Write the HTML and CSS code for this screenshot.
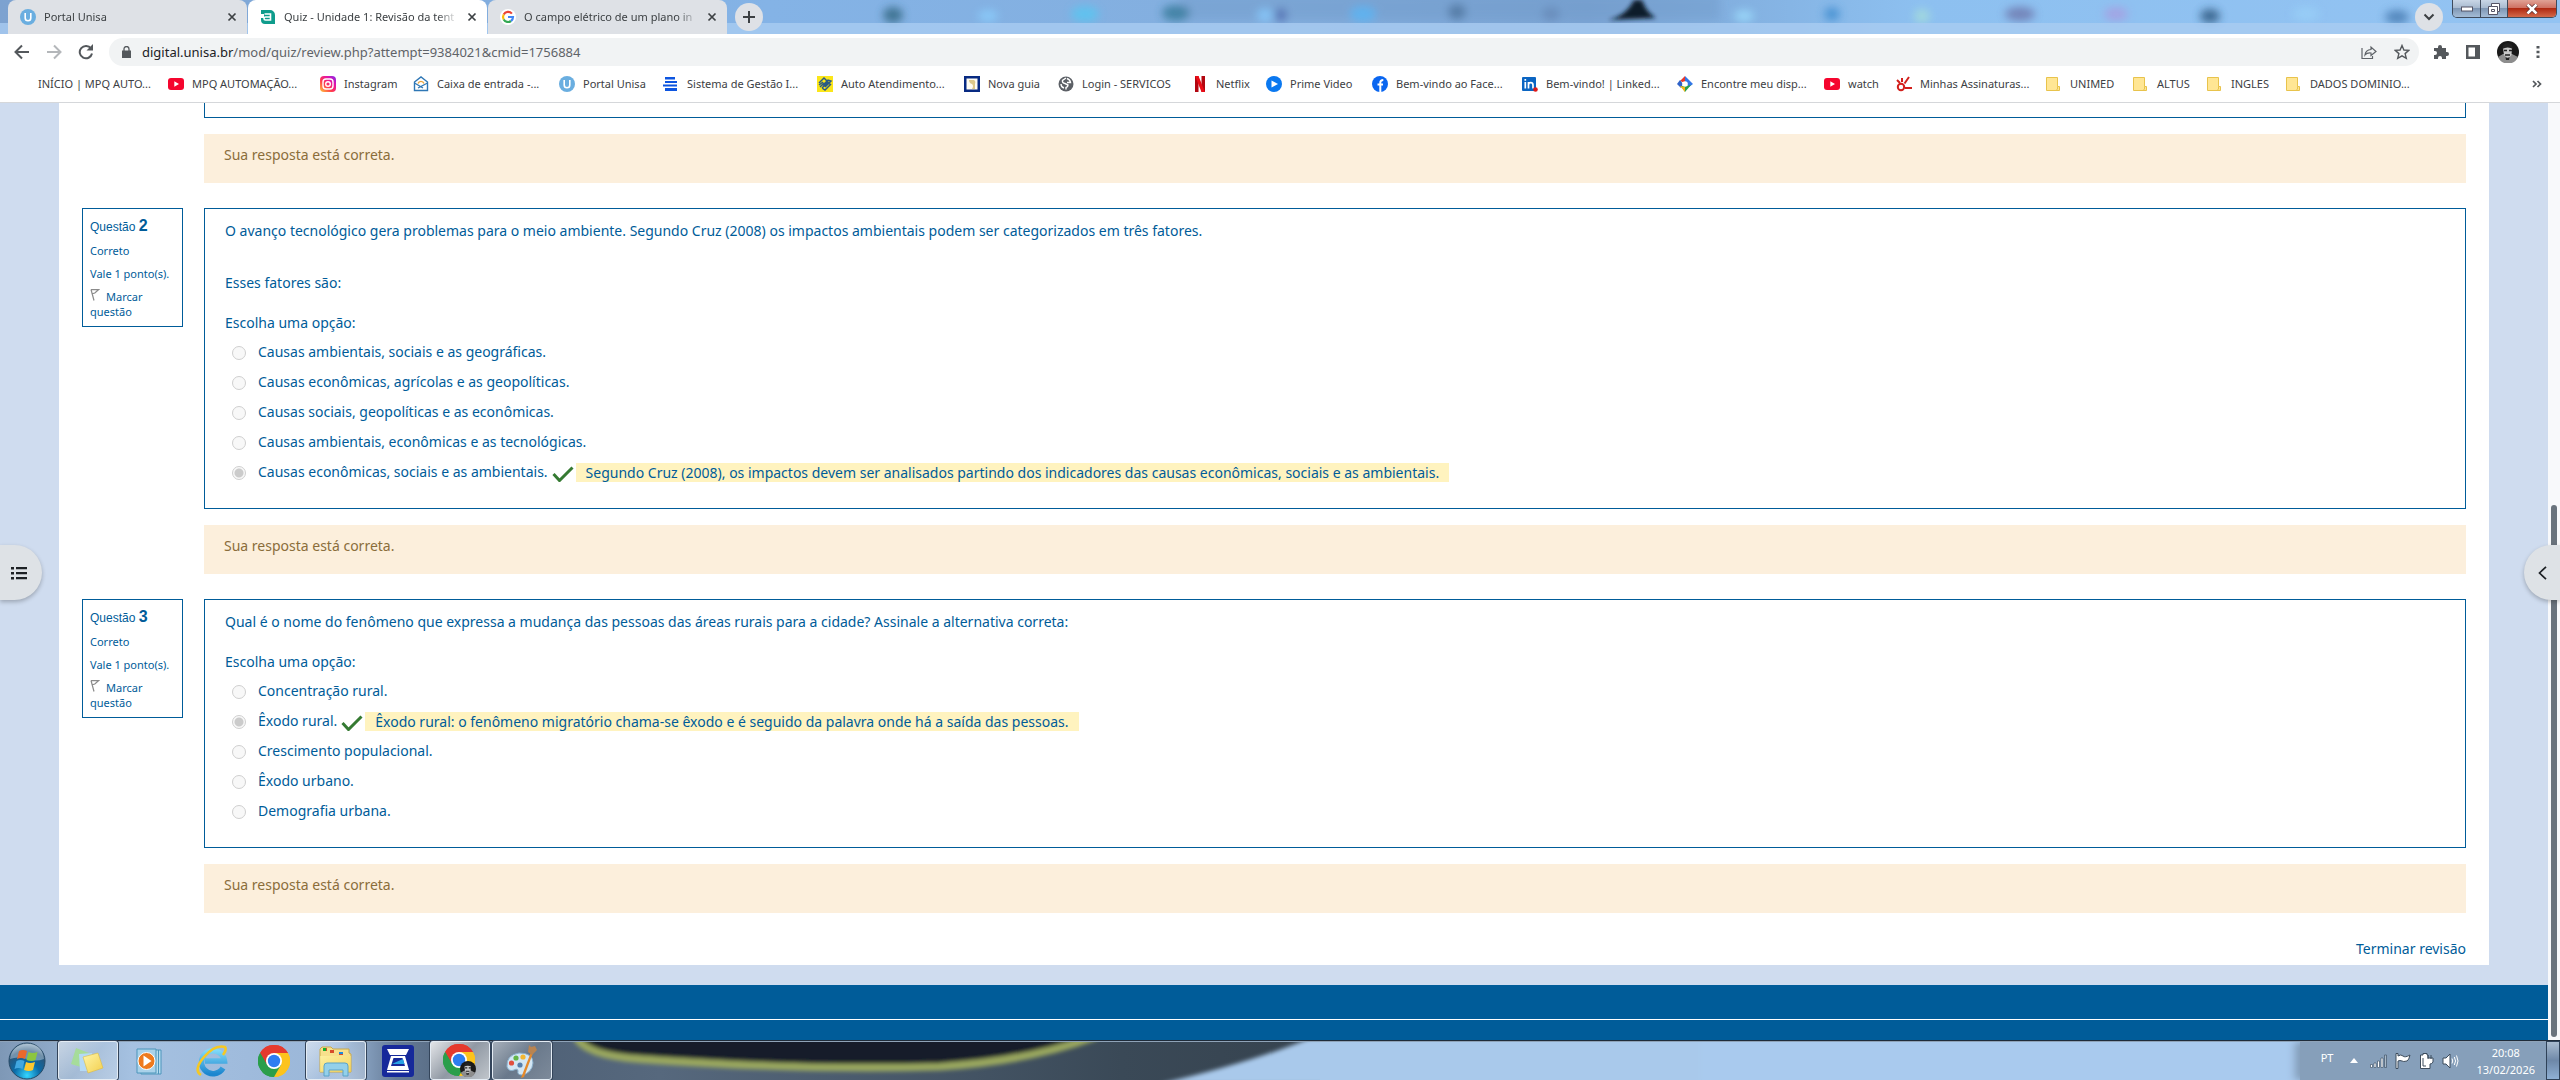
FILE: index.html
```html
<!DOCTYPE html>
<html lang="pt-BR">
<head>
<meta charset="utf-8">
<title>Quiz - Unidade 1: Revisão da tentativa</title>
<link rel="stylesheet" href="styles.css">
</head>
<body>
<svg class="defs" aria-hidden="true">
  <defs>
    <linearGradient id="g-yellow" x1="0" y1="0" x2="1" y2="1"><stop offset="0" stop-color="#fff6a8"/><stop offset="1" stop-color="#f3cf4e"/></linearGradient>
    <linearGradient id="g-ie" x1="0" y1="0" x2="0" y2="1"><stop offset="0" stop-color="#7fd8f8"/><stop offset="1" stop-color="#1b86cf"/></linearGradient>
    <linearGradient id="g-insta" x1="0" y1="1" x2="1" y2="0"><stop offset="0" stop-color="#ffc83a"/><stop offset=".4" stop-color="#ff3a4e"/><stop offset=".7" stop-color="#e313a8"/><stop offset="1" stop-color="#7a2cf0"/></linearGradient>
    <radialGradient id="g-orb" cx=".5" cy=".9" r=".9"><stop offset="0" stop-color="#35d6ff"/><stop offset=".4" stop-color="#0a6ba8"/><stop offset=".75" stop-color="#2c5578"/><stop offset="1" stop-color="#a9bfd0"/></radialGradient>
    <filter id="soft" x="-30%" y="-80%" width="160%" height="260%"><feGaussianBlur stdDeviation="4"/></filter>
    <filter id="soft2" x="-30%" y="-80%" width="160%" height="260%"><feGaussianBlur stdDeviation="2"/></filter>
  </defs>
  <symbol id="i-u" viewBox="0 0 16 16"><circle cx="8" cy="8" r="8" fill="#6aaee0"/><path d="M5.2 4v5a2.8 2.8 0 0 0 5.6 0V4" fill="none" stroke="#fff" stroke-width="1.6"/></symbol>
  <symbol id="i-x" viewBox="0 0 10 10"><path d="M1.5 1.5l7 7M8.5 1.5l-7 7" stroke="#3c4043" stroke-width="1.7"/></symbol>
  <symbol id="i-yt" viewBox="0 0 16 16"><rect y="2" width="16" height="12" rx="3" fill="#f5052e"/><path d="M6.3 5.3v5.4L11 8z" fill="#fff"/></symbol>
  <symbol id="i-folder" viewBox="0 0 14 16"><path d="M.5 1.5h11v9h2v4H.5z" fill="#ffe694" stroke="#e8c34c"/><path d="M11.500 10.500v2.500l-1.500 1.500" fill="none" stroke="#e8c34c"/></symbol>
  <symbol id="i-chrome" viewBox="0 0 32 32"><path d="M16 16L2.140 8A16 16 0 0 1 29.860 8z" fill="#e53a2e"/><path d="M16 16l13.860-8A16 16 0 0 1 16 32z" fill="#fcc31c"/><path d="M16 16v16A16 16 0 0 1 2.140 8z" fill="#2a9e4a"/><path d="M16 8h13.860A16 16 0 0 1 16 32l6.900-12z" fill="#fcc31c"/><path d="M2.140 8A16 16 0 0 1 29.860 8H16l-6.900 12z" fill="#e53a2e"/><path d="M2.140 8A16 16 0 0 0 16 32l6.900-12H9.100z" fill="#2a9e4a"/><circle cx="16" cy="16" r="8" fill="#fff"/><circle cx="16" cy="16" r="6.200" fill="#2d7df0"/></symbol>
  <symbol id="i-avatar" viewBox="0 0 22 22"><circle cx="11" cy="11" r="11" fill="#191919"/><path d="M1 16a11 11 0 0 0 20 0l-6-3H6z" fill="#8d8d8d"/><path d="M6 7q5-4 9 0l-.5 7q-3.500 5-7.500 0z" fill="#c9c9c9"/><path d="M5 8q1-6 6-6 5 1 5 6-5-3-11 0z" fill="#222"/><path d="M7 9.500h3M12 9.500h3M8 14h5" stroke="#222" stroke-width="1.500"/><path d="M8.500 16q2 2 4 0l-.500 3h-3z" fill="#222"/></symbol>
  <symbol id="i-check" viewBox="0 0 22 16"><path d="M1.500 8l6 6.500L20.500 1.500" fill="none" stroke="#357a32" stroke-width="3"/></symbol>
  <symbol id="i-flag" viewBox="0 0 10 12"><path d="M1 .5l3 11M1 .7h7.500L4.800 4 2.200 4.800" fill="none" stroke="#8a8a8a" stroke-width="1.200"/></symbol>
</svg>

<header class="browser">
  <div class="tabstrip">
    <svg class="glass" viewBox="0 0 2560 34" preserveAspectRatio="none" aria-hidden="true">
      <g filter="url(#soft)" opacity=".75">
        <rect x="1180" y="-6" width="540" height="26" fill="#7099c8" opacity=".6"/>
        <ellipse cx="893" cy="15" rx="10" ry="8" fill="#2b6179"/>
        <ellipse cx="988" cy="16" rx="10" ry="6" fill="#8bd0ff"/>
        <ellipse cx="1085" cy="14" rx="14" ry="8" fill="#55c8f3"/>
        <ellipse cx="1176" cy="13" rx="14" ry="8" fill="#2f7593"/>
        <ellipse cx="1265" cy="15" rx="8" ry="6" fill="#86ccff"/>
        <ellipse cx="1281" cy="15" rx="6" ry="7" fill="#4a62a8"/>
        <ellipse cx="1363" cy="14" rx="13" ry="8" fill="#55b4f4"/>
        <ellipse cx="1457" cy="12" rx="9" ry="8" fill="#4a6f98"/>
        <ellipse cx="1551" cy="14" rx="9" ry="7" fill="#6386b4"/>
        <ellipse cx="1744" cy="16" rx="10" ry="6" fill="#9fe0ff"/>
        <ellipse cx="1832" cy="14" rx="8" ry="7" fill="#3b8ace"/>
        <ellipse cx="1922" cy="16" rx="8" ry="7" fill="#a8e0d8"/>
        <ellipse cx="2020" cy="14" rx="15" ry="7" fill="#6a6fa6"/>
        <ellipse cx="2116" cy="14" rx="12" ry="7" fill="#a99be0"/>
        <ellipse cx="2210" cy="16" rx="10" ry="7" fill="#204b72"/>
        <ellipse cx="2306" cy="14" rx="13" ry="7" fill="#9ad0f8"/>
        <ellipse cx="2397" cy="17" rx="12" ry="7" fill="#3f74ac"/>
      </g>
      <path d="M1608 20q18-4 26-20h8q4 12 14 18z" fill="#0f1d2c" filter="url(#soft2)"/>
      <rect y="23" width="2560" height="11" fill="#a9ccf1" opacity=".8"/>
    </svg>
    <div class="tabs">
      <div class="tab"><svg class="i16"><use href="#i-u"/></svg><span class="tab-title">Portal Unisa</span><button class="tab-close" aria-label="Fechar"><svg><use href="#i-x"/></svg></button></div>
      <div class="tab active"><svg class="i16" viewBox="0 0 16 16"><path d="M1 1h9a5 5 0 0 1 5 5v9H5a4 4 0 0 1-4-4V9h3V5H1z" fill="#0f9c8c"/><path d="M4.500 5h6v6h-5a1.400 1.400 0 0 1 0-3h5" fill="none" stroke="#fff" stroke-width="1.600"/></svg><span class="tab-title">Quiz - Unidade 1: Revisão da tent</span><button class="tab-close" aria-label="Fechar"><svg><use href="#i-x"/></svg></button></div>
      <div class="tab"><svg class="i16" viewBox="0 0 16 16"><circle cx="8" cy="8" r="8" fill="#fff"/><g fill="none" stroke-width="2.200"><path d="M11.900 4.600A5 5 0 0 0 3.700 5.500" stroke="#ea4335"/><path d="M3.700 5.500a5 5 0 0 0 0 5" stroke="#fbbc05"/><path d="M3.700 10.500A5 5 0 0 0 11 12" stroke="#34a853"/><path d="M11 12a5 5 0 0 0 2-4H8" stroke="#4285f4"/></g></svg><span class="tab-title">O campo elétrico de um plano in</span><button class="tab-close" aria-label="Fechar"><svg><use href="#i-x"/></svg></button></div>
      <button class="round" aria-label="Nova guia"><svg width="14" height="14" viewBox="0 0 14 14"><path d="M7 1v12M1 7h12" stroke="#3c4043" stroke-width="2"/></svg></button>
    </div>
    <div class="win-area">
      <button class="round" aria-label="Pesquisar guias"><svg width="12" height="8" viewBox="0 0 12 8"><path d="M1.500 1.500L6 6l4.500-4.500" fill="none" stroke="#3c4043" stroke-width="2"/></svg></button>
      <div class="winbtns">
        <button aria-label="Minimizar"><svg width="12" height="6" viewBox="0 0 12 6"><rect x=".5" y="1" width="11" height="4" fill="#fff" stroke="#556"/></svg></button>
        <button aria-label="Restaurar"><svg width="12" height="12" viewBox="0 0 12 12"><path d="M3.500.5h8v8h-2v3h-9v-8h3z" fill="#fff" stroke="#556"/><path d="M3.500 3.500h6v5M3.500 6.500h3v2h-3z" fill="none" stroke="#556"/></svg></button>
        <button class="close" aria-label="Fechar janela"><svg width="12" height="10" viewBox="0 0 12 10"><path d="M1.500.5L10.500 9.500M10.500.5l-9 9" stroke="#5a3030" stroke-width="4"/><path d="M1.500.5L10.500 9.500M10.500.5l-9 9" stroke="#fff" stroke-width="2.600"/></svg></button>
      </div>
    </div>
  </div>

  <div class="toolbar">
    <div class="nav">
      <button aria-label="Voltar"><svg width="16" height="16" viewBox="0 0 16 16"><path d="M8 1.500L1.500 8 8 14.500M1.500 8H15" fill="none" stroke="#54585c" stroke-width="2"/></svg></button>
      <button aria-label="Avançar"><svg width="16" height="16" viewBox="0 0 16 16"><path d="M8 1.500L14.500 8 8 14.500M14.500 8H1" fill="none" stroke="#b4b7ba" stroke-width="2"/></svg></button>
      <button aria-label="Recarregar"><svg width="16" height="16" viewBox="0 0 16 16"><path d="M13 4.500A6.200 6.200 0 1 0 14 9.500" fill="none" stroke="#54585c" stroke-width="2"/><path d="M15 0v6.500H8.500z" fill="#54585c"/></svg></button>
    </div>
    <div class="omnibox">
      <svg width="9" height="12" viewBox="0 0 9 12"><path d="M0 4.500h9V12H0z" fill="#54585c"/><path d="M2 5V3a2.500 2.500 0 0 1 5 0v2" fill="none" stroke="#54585c" stroke-width="1.300"/></svg>
      <span class="url"><b>digital.unisa.br</b>/mod/quiz/review.php?attempt=9384021&amp;cmid=1756884</span>
      <div class="actions">
        <button aria-label="Compartilhar"><svg width="16" height="16" viewBox="0 0 16 16"><path d="M1 4v10.500h10.500V12M4 11q.5-5 6-5.500V3l5 4.500-5 4V9q-4-.500-6 2z" fill="none" stroke="#5f6368" stroke-width="1.200"/></svg></button>
        <button aria-label="Favorito"><svg width="16" height="16" viewBox="0 0 16 16"><path d="M8 1.500l1.900 4.500 4.900.4-3.700 3.200 1.200 4.800L8 11.900l-4.300 2.500 1.200-4.800L1.200 6.400 6.100 6z" fill="none" stroke="#54585c" stroke-width="1.400"/></svg></button>
      </div>
    </div>
    <div class="tools">
      <button aria-label="Extensões"><svg width="16" height="16" viewBox="0 0 16 16"><path d="M1 4h4V3a2 2 0 0 1 4 0v1h4v4h1a2 2 0 0 1 0 4h-1v3H9v-1a2 2 0 0 0-4 0v1H1v-4h1a2 2 0 0 0 0-4H1z" fill="#54585c"/></svg></button>
      <button aria-label="Painel lateral"><svg width="14" height="14" viewBox="0 0 14 14"><path d="M0 0h14v14H0zM2.500 2.500v9H9v-9z" fill="#54585c" fill-rule="evenodd"/></svg></button>
      <button aria-label="Perfil"><svg width="22" height="22"><use href="#i-avatar"/></svg></button>
      <button aria-label="Menu"><svg width="4" height="14" viewBox="0 0 4 14"><path d="M.500 1h3v2.500h-3zM.500 5.800h3v2.500h-3zM.500 10.500h3V13h-3z" fill="#54585c"/></svg></button>
    </div>
  </div>

  <nav class="bookmarks">
    <a href="#">INÍCIO | MPQ AUTO...</a>
    <a href="#"><svg class="i16"><use href="#i-yt"/></svg>MPQ AUTOMAÇÃO...</a>
    <a href="#"><svg class="i16" viewBox="0 0 16 16"><rect width="16" height="16" rx="4" fill="url(#g-insta)"/><rect x="3" y="3" width="10" height="10" rx="3" fill="none" stroke="#fff" stroke-width="1.400"/><circle cx="8" cy="8" r="2.300" fill="none" stroke="#fff" stroke-width="1.400"/></svg>Instagram</a>
    <a href="#"><svg class="i16" viewBox="0 0 16 16"><path d="M1.500 6L8 1l6.500 5v8.500h-13z" fill="#fff" stroke="#2f77b5" stroke-width="1.400"/><path d="M1.500 7l8.500 5M14.500 7L5 12" stroke="#2f77b5" stroke-width="1.400"/><path d="M5 7.500a3.200 3.200 0 0 1 6 0" fill="none" stroke="#e9a23a" stroke-width="1.400"/></svg>Caixa de entrada -...</a>
    <a href="#"><svg class="i16"><use href="#i-u"/></svg>Portal Unisa</a>
    <a href="#"><svg class="i16" viewBox="0 0 16 16"><path d="M2 1h10v2.500H2zM2 5h12v2H2zM0 8.500h14v2H0zM2 12h12v3H2z" fill="#0d55e0"/></svg>Sistema de Gestão I...</a>
    <a href="#"><svg class="i16" viewBox="0 0 16 16"><path d="M0 0h16v16H0z" fill="#fbe619"/><path d="M2 7l5-5 3 3M6 9l5-5 3 1-6 6M2 9l4-3M14 8l-6 6-3-2M5 12l6-6 3 3M3 11l4-4" fill="none" stroke="#2b5a86" stroke-width="1.500"/></svg>Auto Atendimento...</a>
    <a href="#"><svg class="i16" viewBox="0 0 16 16"><path d="M0 0h16v16H0z" fill="#082a82"/><path d="M2.500 2.500h11v11h-11z" fill="#fffdf2"/><path d="M5 4h5q2 1 1 4v5H8q2-3 0-5-3-1-3-4z" fill="#ddc98a"/></svg>Nova guia</a>
    <a href="#"><svg class="i16" viewBox="0 0 16 16"><circle cx="8" cy="8" r="7.500" fill="#5c6066"/><path d="M8 2L4.500 4.500Q4 7 7 7.500L10 9q0 2-2 2.500v2M9 2.500q3 1 3.500 4H9M3 8q0 3 3 4" fill="none" stroke="#fff" stroke-width="1.400"/></svg>Login - SERVICOS</a>
    <a href="#"><svg class="i16" viewBox="0 0 16 16"><path d="M3 0h3.500v16H3zM9.500 0H13v16H9.500z" fill="#b20610"/><path d="M3 0h3.500L13 16H9.500z" fill="#e90c16"/></svg>Netflix</a>
    <a href="#"><svg class="i16" viewBox="0 0 16 16"><circle cx="8" cy="8" r="8" fill="#0a78f0"/><path d="M5.500 4.500v7L12 8z" fill="#fff"/></svg>Prime Video</a>
    <a href="#"><svg class="i16" viewBox="0 0 16 16"><circle cx="8" cy="8" r="8" fill="#0a66f0"/><path d="M8.300 16V6.500q0-2.500 3-2.500M5.500 8.500h5.500" fill="none" stroke="#fff" stroke-width="2"/></svg>Bem-vindo ao Face...</a>
    <a href="#"><svg class="i16" viewBox="0 0 16 16"><rect x="0" y="1" width="14" height="14" rx="1" fill="#0b65c2"/><path d="M3.300 6v6.500M3.300 3v1.700M6.500 12.500V6M6.500 9q0-2.300 2.200-2.300T11 9v3.500" fill="none" stroke="#fff" stroke-width="1.700"/><circle cx="13.500" cy="13.500" r="2.300" fill="#e01818"/></svg>Bem-vindo! | Linked...</a>
    <a href="#"><svg class="i16" viewBox="0 0 16 16"><path d="M8 0L3 5l5 2z" fill="#e8382c"/><path d="M8 0l8 8-4 3-4-4z" fill="#3277e8"/><path d="M3 4L0 8l4 4 2-4z" fill="#2f62c8"/><path d="M4 10l4 6 6-7-5 1z" fill="#2b9f4c"/><path d="M3 10l5 6v-5z" fill="#f5b516"/><circle cx="8" cy="8" r="2.800" fill="#fff"/></svg>Encontre meu disp...</a>
    <a href="#"><svg class="i16"><use href="#i-yt"/></svg>watch</a>
    <a href="#"><svg class="i16" viewBox="0 0 16 16"><g fill="none" stroke="#d2201c" stroke-width="2"><circle cx="5" cy="11" r="3.200"/><path d="M6 6V2M8.500 7.500L13 1M1 4l3 3M9 12h7"/></g></svg>Minhas Assinaturas...</a>
    <a href="#"><svg class="fold"><use href="#i-folder"/></svg>UNIMED</a>
    <a href="#"><svg class="fold"><use href="#i-folder"/></svg>ALTUS</a>
    <a href="#"><svg class="fold"><use href="#i-folder"/></svg>INGLES</a>
    <a href="#"><svg class="fold"><use href="#i-folder"/></svg>DADOS DOMINIO...</a>
    <button class="more" aria-label="Mais favoritos"><svg width="10" height="8" viewBox="0 0 10 8"><path d="M1 1l3 3-3 3M5.500 1l3 3-3 3" fill="none" stroke="#54585c" stroke-width="1.700"/></svg></button>
  </nav>
</header>

<div class="viewport">
  <div class="page">
    <main class="card">
      <section class="question">
        <div class="body"><div class="box cut"></div><div class="feedback">Sua resposta está correta.</div></div>
      </section>

      <section class="question">
        <aside class="info">
          <h3>Questão <strong>2</strong></h3>
          <p>Correto</p>
          <p>Vale 1 ponto(s).</p>
          <a href="#"><svg class="flag"><use href="#i-flag"/></svg>Marcar questão</a>
        </aside>
        <div class="body">
          <div class="box">
            <p class="lead">O avanço tecnológico gera problemas para o meio ambiente. Segundo Cruz (2008) os impactos ambientais podem ser categorizados em três fatores.</p>
            <p>Esses fatores são:</p>
            <fieldset>
              <legend>Escolha uma opção:</legend>
              <div class="opt"><input type="radio" name="q2" id="q2a" disabled><label for="q2a">Causas ambientais, sociais e as geográficas.</label></div>
              <div class="opt"><input type="radio" name="q2" id="q2b" disabled><label for="q2b">Causas econômicas, agrícolas e as geopolíticas.</label></div>
              <div class="opt"><input type="radio" name="q2" id="q2c" disabled><label for="q2c">Causas sociais, geopolíticas e as econômicas.</label></div>
              <div class="opt"><input type="radio" name="q2" id="q2d" disabled><label for="q2d">Causas ambientais, econômicas e as tecnológicas.</label></div>
              <div class="opt"><input type="radio" name="q2" id="q2e" disabled checked><label for="q2e">Causas econômicas, sociais e as ambientais.</label><svg class="check"><use href="#i-check"/></svg><span class="hint">Segundo Cruz (2008), os impactos devem ser analisados partindo dos indicadores das causas econômicas, sociais e as ambientais.</span></div>
            </fieldset>
          </div>
          <div class="feedback">Sua resposta está correta.</div>
        </div>
      </section>

      <section class="question">
        <aside class="info">
          <h3>Questão <strong>3</strong></h3>
          <p>Correto</p>
          <p>Vale 1 ponto(s).</p>
          <a href="#"><svg class="flag"><use href="#i-flag"/></svg>Marcar questão</a>
        </aside>
        <div class="body">
          <div class="box">
            <p>Qual é o nome do fenômeno que expressa a mudança das pessoas das áreas rurais para a cidade? Assinale a alternativa correta:</p>
            <fieldset>
              <legend>Escolha uma opção:</legend>
              <div class="opt"><input type="radio" name="q3" id="q3a" disabled><label for="q3a">Concentração rural.</label></div>
              <div class="opt"><input type="radio" name="q3" id="q3b" disabled checked><label for="q3b">Êxodo rural.</label><svg class="check"><use href="#i-check"/></svg><span class="hint">Êxodo rural: o fenômeno migratório chama-se êxodo e é seguido da palavra onde há a saída das pessoas.</span></div>
              <div class="opt"><input type="radio" name="q3" id="q3c" disabled><label for="q3c">Crescimento populacional.</label></div>
              <div class="opt"><input type="radio" name="q3" id="q3d" disabled><label for="q3d">Êxodo urbano.</label></div>
              <div class="opt"><input type="radio" name="q3" id="q3e" disabled><label for="q3e">Demografia urbana.</label></div>
            </fieldset>
          </div>
          <div class="feedback">Sua resposta está correta.</div>
        </div>
      </section>
      <a class="finish" href="#">Terminar revisão</a>
    </main>
    <footer class="footer"><hr></footer>
  </div>
  <div class="scrollbar"><div class="thumb"></div></div>
  <button class="drawer left" aria-label="Abrir índice"><svg width="16" height="14" viewBox="0 0 16 14"><path d="M0 1h3v2.500H0zM0 6h3v2.500H0zM0 11h3v2.500H0zM5 1h11v2.300H5zM5 6h11v2.300H5zM5 11h11v2.300H5z" fill="#1d2125"/></svg></button>
  <button class="drawer right" aria-label="Abrir blocos"><svg width="9" height="14" viewBox="0 0 9 14"><path d="M8 .800L1.500 7 8 13.200" fill="none" stroke="#1d2125" stroke-width="1.700"/></svg></button>
</div>

<footer class="taskbar">
  <svg class="wall" viewBox="0 0 2560 40" preserveAspectRatio="none" aria-hidden="true">
    <defs><linearGradient id="w1"><stop offset="0" stop-color="#7e98b6"/><stop offset=".1" stop-color="#a5c1e1"/><stop offset=".26" stop-color="#9ab6d8"/><stop offset=".3" stop-color="#667c97"/><stop offset=".36" stop-color="#4d5f75"/><stop offset=".5" stop-color="#56687d"/><stop offset=".85" stop-color="#3a4957"/><stop offset="1" stop-color="#36434f"/></linearGradient></defs>
    <rect width="2560" height="40" fill="#a9caee"/>
    <rect width="1320" height="40" fill="url(#w1)"/>
    <g filter="url(#soft2)">
      <path d="M1310-4Q1250 22 1160 44H1700V-4z" fill="#a9c9eb"/>
      <path d="M576-6Q584 20 650 22Q820 32 930 28Q1010 24 1080-6z" fill="#151f2b"/>
      <path d="M576-6Q584 14 640 18Q800 30 940 26Q1030 20 1096-6" fill="none" stroke="#9aa75f" stroke-width="8"/>
    </g>
    <path d="M2295 0h265v40h-265z" fill="#829cb8" filter="url(#soft)"/>
    <path d="M2300 0h260v40h-260z" fill="#869fba"/>
  </svg>
  <button class="orb" aria-label="Iniciar"><svg width="38" height="38" viewBox="0 0 38 38"><circle cx="19" cy="19" r="18" fill="url(#g-orb)" stroke="#274a66"/><path d="M2 17Q4 3 19 2t17 15Q28 20 19 17T2 17z" fill="#c8d9e6" opacity=".45"/><path d="M11 9q4-2 8 0l-2 8q-4-2-8 0z" fill="#e9692c"/><path d="M20.500 10q4 2 9 0l-2 8q-4 2-9 0z" fill="#8cc63f"/><path d="M8.500 19q4-2 8 0l-2 8q-4-2-8 0z" fill="#41a7e0"/><path d="M18 20q4 2 9 0l-2 8q-4 2-9 0z" fill="#fdc82f"/></svg></button>
  <div class="apps">
    <button class="open" aria-label="Notas"><svg width="34" height="32" viewBox="0 0 34 32"><path d="M5 3l13 5-5 15L0 19z" fill="#a6dc9a"/><path d="M8 9l13-1 2 18H9z" fill="#b5daf6"/><path d="M12 12l15-4 5 15-15 5z" fill="url(#g-yellow)" stroke="#dcba43" stroke-width=".600"/></svg></button>
    <button aria-label="Media Player"><svg width="30" height="32" viewBox="0 0 30 32"><path d="M6 5h20v24H6z" fill="#b5dcf0" stroke="#4d95bb"/><path d="M2 4h19v24H2z" fill="#a9d2ea" stroke="#4d95bb"/><path d="M23.500 5v24" stroke="#4d95bb"/><circle cx="11.500" cy="16" r="8.500" fill="#ee7a1e" stroke="#fff"/><path d="M8.500 10.500v11l8-5.500z" fill="#fff"/></svg></button>
    <button aria-label="Internet Explorer"><svg width="32" height="34" viewBox="0 0 32 34"><path d="M27 24a11.500 11.500 0 1 1 1.500-7H9" fill="none" stroke="url(#g-ie)" stroke-width="5.500"/><path d="M5 31Q-3 26 8 13T29 3q2 3-2 8" fill="none" stroke="#f5c824" stroke-width="2.600"/></svg></button>
    <button aria-label="Chrome"><svg width="32" height="32"><use href="#i-chrome"/></svg></button>
    <button class="open" aria-label="Explorador"><svg width="34" height="34" viewBox="0 0 34 34"><path d="M1 5l2-2h9l2 2h16v4l2 1v18H1z" fill="#f7e08c" stroke="#c9a94c"/><path d="M4 4h4v3H4zM11 6h4v3h-4zM20 8h4v3h-4z" fill="#d84c2a"/><path d="M4 4h3v3H4z" fill="#18b02c"/><path d="M20 8h4v2h-4z" fill="#1c8be0"/><path d="M1 12h31v16H1z" fill="url(#g-yellow)" opacity=".7"/><path d="M5 32V22q0-3 3-3h18q3 0 3 3v10h-5v-6H10v6z" fill="#93d0ea" stroke="#5aa3c8"/></svg></button>
    <button aria-label="Scanner"><svg width="32" height="32" viewBox="0 0 32 32"><rect width="32" height="32" rx="3" fill="#16299a"/><path d="M5 4h22l-3 6H8zM9 11h14l4 14H5z" fill="#fff"/><path d="M11.500 13h9l2.500 8H9z" fill="#16299a"/><path d="M12 18l9-4 1.500 5H10z" fill="#28a2e4"/><path d="M5 26h22v1.500H5z" fill="#fff"/></svg></button>
    <button class="open lit" aria-label="Chrome aberto"><svg width="34" height="34" viewBox="0 0 34 34"><use href="#i-chrome" width="32" height="32"/><use href="#i-avatar" x="17" y="17" width="16" height="16"/></svg></button>
    <button class="open" aria-label="Paint"><svg width="34" height="34" viewBox="0 0 34 34"><path d="M2 23Q1 11 14 9q14 0 14 10-1 10-11 12-5 0-4-4 0-3-4-1-5 2-7-3z" fill="#d3e7f5" stroke="#8ab0cc"/><circle cx="6.500" cy="19" r="2.600" fill="#e05040"/><circle cx="11" cy="14" r="2.600" fill="#63b548"/><circle cx="18" cy="13" r="2.600" fill="#f2b632"/><circle cx="15" cy="21" r="2.600" fill="#557fae"/><path d="M26 8l2 1-9 24-3 1z" fill="#e58a2c"/><path d="M24 1l2 2 4-1 2 4-5 5-4-3z" fill="#b88452"/></svg></button>
  </div>
  <div class="tray">
    <span class="lang">PT</span>
    <svg width="8" height="5" viewBox="0 0 8 5"><path d="M4 0l4 5H0z" fill="#fff"/></svg>
    <svg width="17" height="14" viewBox="0 0 17 14"><path d="M.500 10.500h2v3h-2zM4 9h2v4.500H4zM7.500 7h2v6.500h-2zM11 4h2v9.500h-2z" fill="#fff" stroke="#44566a" stroke-width=".700"/><path d="M14.500 1h2v12.500h-2z" fill="#a9b9c8" stroke="#44566a" stroke-width=".700"/></svg>
    <svg width="16" height="16" viewBox="0 0 16 16"><path d="M1 .500h2V3q3-2 5 0t7-1q-1 5-3 6-4 1-5 0-2-1-4 0v7.500H1z" fill="#fff" stroke="#3d4c5c"/></svg>
    <svg width="15" height="16" viewBox="0 0 15 16"><path d="M4 2V.500h4V2h1v3h5v4q-1 2-3 2v4.500H1.500V2z" fill="#fff" stroke="#3d4c5c"/><path d="M4 5v8h3M9 2v4M12 2v4" fill="none" stroke="#3d4c5c"/></svg>
    <svg width="17" height="16" viewBox="0 0 17 16"><path d="M1 5h3l4-4v14l-4-4H1z" fill="#fff" stroke="#3d4c5c"/><path d="M10 5.500q1.500 2.500 0 5M12.300 4q2.500 4 0 8M14.500 2.500q3 5.500 0 11" fill="none" stroke="#fff"/></svg>
    <div class="clock"><span>20:08</span><span>13/02/2026</span></div>
    <button class="peek" aria-label="Mostrar área de trabalho"></button>
  </div>
</footer>
</body>
</html>
```

FILE: styles.css
```css
* { box-sizing: border-box; }

html, body { height: 100%; }

body {
  margin: 0;
  display: flex;
  flex-direction: column;
  overflow: hidden;
  font-family: "Noto Sans", "Open Sans", sans-serif;
  font-size: 14px;
  line-height: 22px;
  color: #005c99;
  background: #fff;
}

button {
  display: flex;
  align-items: center;
  justify-content: center;
  padding: 0;
  border: 0;
  background: none;
}

svg { flex: none; display: block; }
a { color: inherit; text-decoration: none; }
h3, p { margin: 0; }

.defs { position: absolute; width: 0; height: 0; }
.i16 { width: 16px; height: 16px; }

/* Browser window */
.browser {
  flex: none;
  color: #3c4043;
  border-bottom: 1px solid #d5d7da;
}

.tabstrip {
  position: relative;
  display: flex;
  justify-content: space-between;
  height: 34px;
  background: linear-gradient(90deg, #7da2d0 0, #84b3e6 30%, #83aede 50%, #7ba4d4 62%, #8dc0f0 75%, #93c3f2 100%);
}

.glass { position: absolute; inset: 0; width: 100%; height: 100%; }

.tabs, .win-area { position: relative; display: flex; align-items: center; }
.tabs { padding-left: 8px; gap: 1px; }

.tab {
  display: flex;
  align-items: center;
  gap: 8px;
  width: 239px;
  height: 34px;
  padding: 0 9px 0 12px;
  border-radius: 8px 8px 0 0;
  background: #dee1e6;
  font-size: 11px;
}

.tab.active { background: #fff; }

.tab-title {
  flex: 1;
  overflow: hidden;
  white-space: nowrap;
  mask-image: linear-gradient(90deg, #000 88%, transparent);
}

.tab-close { width: 12px; height: 16px; }
.tab-close svg { width: 10px; height: 10px; }

.round {
  width: 28px;
  height: 28px;
  border-radius: 50%;
  background: #dee1e6;
}

.tabs .round { margin-left: 7px; }

.win-area { align-items: flex-start; gap: 9px; padding-right: 3px; }
.win-area .round { margin-top: 3px; }

.winbtns {
  display: grid;
  grid-template-columns: 28px 27px 48px;
  height: 18px;
  border: 1px solid #3f4b5c;
  border-top: 0;
  border-radius: 0 0 5px 5px;
  overflow: hidden;
}

.winbtns button {
  border-right: 1px solid #3f4b5c;
  background: linear-gradient(#c9d6e6, #a9bbd0 45%, #7f97b4 50%, #a4bcd6);
}

.winbtns .close { border-right: 0; background: linear-gradient(#e0a295, #cf7263 45%, #b02a12 50%, #d4694a); }

.toolbar {
  display: flex;
  align-items: center;
  height: 36px;
  padding: 0 20px 0 14px;
}

.nav { display: flex; gap: 16px; margin-right: 15px; }

.omnibox {
  flex: 1;
  display: flex;
  align-items: center;
  gap: 11px;
  height: 28px;
  padding: 0 9px 0 13px;
  border-radius: 14px;
  background: #f1f3f4;
}

.url { flex: 1; font-size: 13px; color: #5f6368; }
.url b { font-weight: 400; color: #202124; }

.actions { display: flex; gap: 17px; }
.tools { display: flex; align-items: center; gap: 17px; margin-left: 14px; }

.bookmarks {
  display: grid;
  grid-template-columns: 130px 152px 93px 146px 104px 154px 147px 94px 134px 74px 106px 150px 155px 147px 72px 150px 87px 74px 79px 1fr 16px;
  align-items: center;
  height: 32px;
  padding: 0 15px 4px 38px;
  font-size: 11px;
}

.bookmarks a { display: flex; align-items: center; gap: 8px; white-space: nowrap; }
.fold { width: 14px; height: 16px; margin-right: 2px; }

/* Web page */
.viewport {
  position: relative;
  flex: 1;
  min-height: 0;
  display: flex;
  overflow: hidden;
}

.page {
  flex: 1;
  display: flex;
  flex-direction: column;
  background: #cfdcef;
}

.card {
  display: flex;
  flex-direction: column;
  gap: 25px;
  margin: 0 59px 20px;
  padding: 0 23px 5px;
  background: #fff;
}

.question { display: flex; align-items: flex-start; gap: 21px; }
.question:first-child { padding-left: 122px; }

.body { flex: 1; display: flex; flex-direction: column; gap: 16px; }

.box { padding: 11px 20px 21px; border: 1px solid #005c99; }
.box.cut { height: 15px; padding: 0; border-top: 0; }
.box p { margin-bottom: 18px; }
.box .lead { margin-bottom: 30px; }

.info {
  width: 101px;
  padding: 7px;
  border: 1px solid #005c99;
  font-size: 11px;
  line-height: 15px;
}

.info h3 {
  margin-bottom: 6px;
  font: 400 12px/20px "Liberation Sans", Arial, sans-serif;
}

.info strong { font-size: 16px; }
.info p { margin-bottom: 8px; }
.info a { display: block; }
.flag { display: inline-block; width: 10px; height: 12px; margin-right: 6px; }

fieldset { margin: 0; padding: 0; border: 0; }
legend { padding: 0; margin-bottom: 3px; }

.opt { display: flex; align-items: center; height: 30px; }
.opt label { margin-left: 12px; }

.opt input {
  appearance: none;
  width: 14px;
  height: 14px;
  margin: 2px 0 0 7px;
  border: 1px solid #cfcfcf;
  border-radius: 50%;
  background: #f8f8f8;
}

.opt input:checked { background: radial-gradient(circle, #cbcbcb 0 4px, #f8f8f8 5px); }

.check { width: 22px; height: 16px; margin: 3px 2px 0 4px; }
.hint { padding: 0 10px; line-height: 19px; background: #fff3bf; }

.feedback {
  padding: 10px 20px 17px;
  color: #8a6d3b;
  background: #fcefdc;
}

.finish { align-self: flex-end; }

.footer { flex: 1; background: #005c99; }
.footer hr { margin: 34px 0 0; border: 0; border-top: 1px solid #fff; }

.scrollbar {
  flex: none;
  width: 12px;
  display: flex;
  justify-content: center;
  align-items: flex-end;
  padding-bottom: 3px;
  background: #f8f9fb;
}

.thumb { width: 6px; height: 57%; border-radius: 3px; background: #6a737d; }

.drawer {
  position: absolute;
  top: 442px;
  height: 55px;
  background: #dee2e6;
  box-shadow: 0 2px 4px rgba(0, 0, 0, .25);
}

.drawer.left { left: 0; width: 42px; padding-right: 4px; border-radius: 0 28px 28px 0; }
.drawer.right { right: 0; width: 36px; border-radius: 28px 0 0 28px; }

/* Desktop taskbar */
.taskbar {
  position: relative;
  flex: none;
  display: flex;
  align-items: stretch;
  height: 40px;
  border-top: 1px solid #1f2c3a;
}

.wall { position: absolute; inset: 0; width: 100%; height: 100%; border-top: 1px solid #8fa3b8; }
.orb, .apps, .tray { position: relative; display: flex; }
.orb { width: 54px; }
.apps { gap: 2px; padding-left: 4px; }
.apps button { width: 60px; }

.apps .open {
  border: 1px solid #e4ecf4;
  border-radius: 3px;
  background: linear-gradient(135deg, rgba(255, 255, 255, .5), rgba(255, 255, 255, .15) 50%, rgba(255, 255, 255, .25));
  box-shadow: 0 0 0 1px #33445a;
}

.apps .lit { background: linear-gradient(135deg, #e3e5e8, #9099a4 50%, #c0c5cb); }

.tray {
  flex: 1;
  justify-content: flex-end;
  align-items: center;
  gap: 8px;
  color: #fff;
  font-size: 11px;
}

.lang { margin-right: 9px; padding-bottom: 6px; }
.tray svg:first-of-type { margin-right: 4px; }

.clock {
  display: flex;
  flex-direction: column;
  align-items: center;
  margin: 0 3px 0 9px;
  line-height: 17px;
}

.peek {
  align-self: stretch;
  width: 14px;
  border: 1px solid #2f4258;
  background: linear-gradient(#a9bccf, #6e88a8 50%, #8fb0d4);
}
```
